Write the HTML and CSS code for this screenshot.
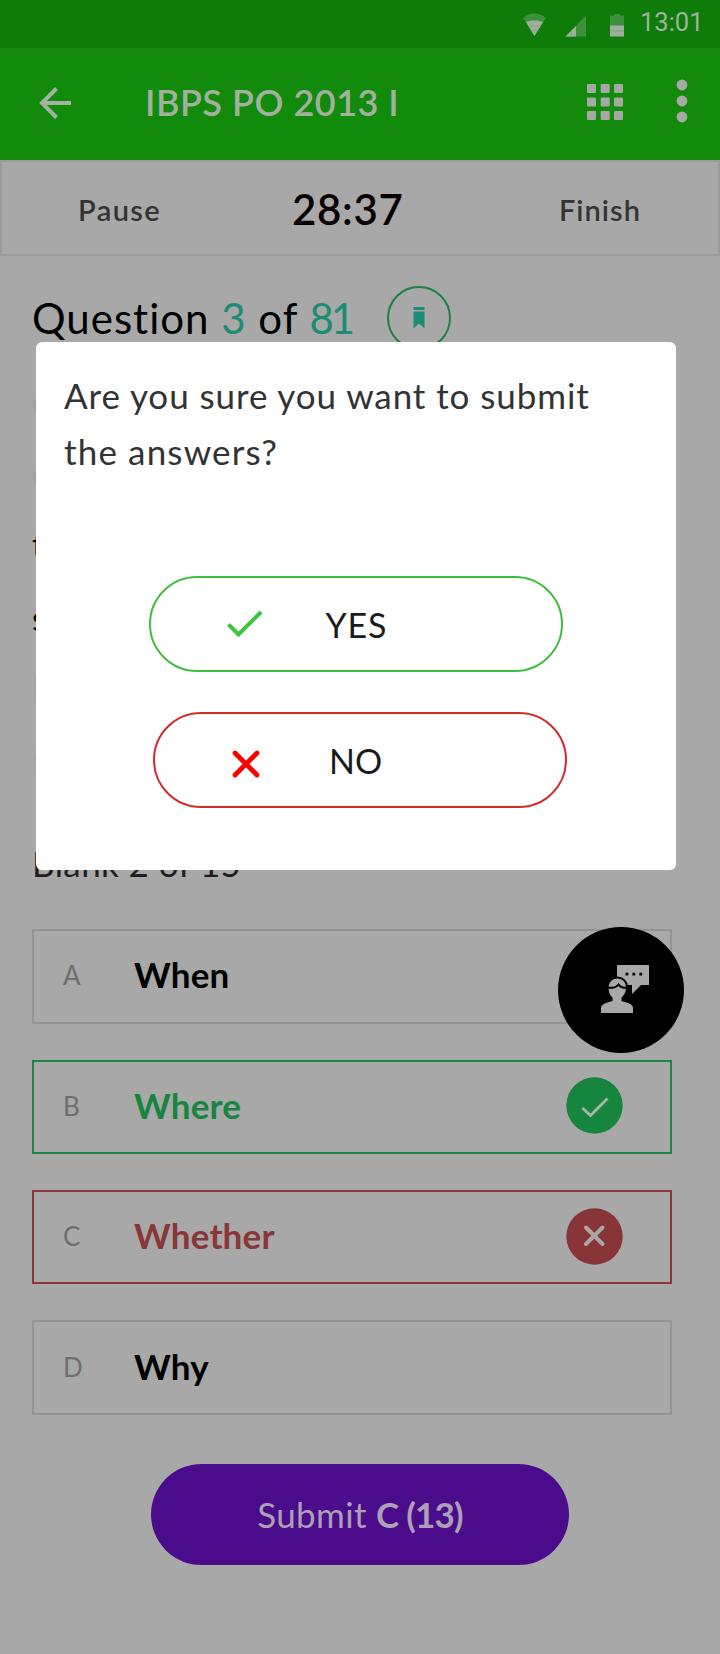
FILE: index.html
```html
<!DOCTYPE html>
<html lang="en">
<head>
<meta charset="utf-8">
<title>IBPS PO 2013 I</title>
<link rel="stylesheet" href="styles.css">
</head>
<body>
<div class="screen">
  <div class="status">
    <svg class="status-icons" width="106" height="26" viewBox="0 0 106 26">
      <path class="dim" d="M0 5C7-1 16-1 23 5L11.500 23Z"/>
      <path class="lit" d="M3 9C8 7 15 7 20 9L11.500 23Z"/>
      <path class="dim" d="M63 2.500V23.500H42.500Z"/>
      <path class="lit" d="M53 13V23.500H42.500Z"/>
      <path class="dim" d="M87 2.500h4V1h6v1.500h4V13H87Z"/>
      <path class="lit" d="M87 12.500h14v11H87Z"/>
      <path class="seam" d="M87 18h14M48.500 18v6M7 13h9M8.500 17h6"/>
    </svg>
    <span class="clock">13:01</span>
  </div>

  <header class="appbar">
    <svg class="back" width="34" height="32" viewBox="0 0 34 32"><path d="M32 16H3M17.500 1.500L3 16L17.500 30.500"/></svg>
    <h1 class="title">IBPS PO 2013 I</h1>
    <svg class="grid-icon" width="36" height="36" viewBox="0 0 36 36">
      <rect x="0" y="0" width="9" height="9" rx="1"/><rect x="13.700" y="0" width="9" height="9" rx="1"/><rect x="27" y="0" width="9" height="9" rx="1"/>
      <rect x="0" y="13.500" width="9" height="9" rx="1"/><rect x="13.700" y="13.500" width="9" height="9" rx="1"/><rect x="27" y="13.500" width="9" height="9" rx="1"/>
      <rect x="0" y="27" width="9" height="9" rx="1"/><rect x="13.700" y="27" width="9" height="9" rx="1"/><rect x="27" y="27" width="9" height="9" rx="1"/>
    </svg>
    <svg class="more" width="12" height="44" viewBox="0 0 12 44"><circle cx="6" cy="6" r="5.400"/><circle cx="6" cy="22" r="5.400"/><circle cx="6" cy="38" r="5.400"/></svg>
  </header>

  <div class="timer">
    <span class="pause">Pause</span>
    <span class="time">28:37</span>
    <span class="finish">Finish</span>
  </div>

  <main class="content">
    <div class="question">
      <h2 class="counter">Question <em>3</em> of <em class="total">81</em></h2>
      <span class="bookmark">
        <svg width="12" height="22" viewBox="0 0 12 22"><path d="M.5 0h11v3H.5ZM.5 4.500h11V21.500L6 16.500L.5 21.500Z"/></svg>
      </span>
    </div>
    <div class="passage">
      <p class="faint">c</p>
      <p class="faint">c</p>
      <p>t</p>
      <p>s</p>
      <p class="faint">l</p>
      <p class="faint">t</p>
    </div>
    <p class="blank">Blank 2 of 15</p>

    <div class="options">
      <div class="option"><span class="key">A</span><span class="word">When</span></div>
      <div class="option right"><span class="key">B</span><span class="word">Where</span>
        <svg class="mark" width="57" height="57" viewBox="0 0 57 57"><circle cx="28.500" cy="28.500" r="28.200"/><path d="M16.500 31L24.500 38.500L41.500 21.500"/></svg>
      </div>
      <div class="option wrong"><span class="key">C</span><span class="word">Whether</span>
        <svg class="mark" width="57" height="57" viewBox="0 0 57 57"><circle cx="28.500" cy="28.500" r="28.200"/><path class="cross" d="M20 19.500L36.500 36M36.500 19.500L20 36"/></svg>
      </div>
      <div class="option"><span class="key">D</span><span class="word">Why</span></div>
    </div>

    <button class="submit"><span>Submit <b>C (13)</b></span></button>
  </main>

  <button class="help" aria-label="Help">
    <svg width="48" height="48" viewBox="0 0 48 48">
      <path class="fig" d="M16 0H48V20H40L31 29V20H16Z"/>
      <path class="bg" d="M24.500 7.800h2.800v2.800h-2.800ZM31.400 7.800h2.800v2.800h-2.800ZM38.300 7.800h2.800v2.800h-2.800Z"/>
      <circle class="bg" cx="16.500" cy="22" r="10.500"/>
      <path class="fig" d="M7.500 22.500C8 10.500 25 10.500 25 22.500C25 27 23 30.500 20.500 32.500V36L27 38Q32 40 32 43V48H0V43Q0 40 5 38L11.500 36V32.500C9 30.500 7.500 27 7.500 22.500Z"/>
      <path class="hair" d="M7 22.500Q14 24 17.500 19.500Q20 23.500 26 22.500"/>
    </svg>
  </button>

  <div class="dialog" role="dialog">
    <p class="ask"><span>Are you sure you want to submit</span><br><span class="second">the answers?</span></p>
    <button class="choice yes">
      <svg width="36" height="28" viewBox="0 0 36 28"><path d="M1.500 14.500L11.500 24.500L34 2"/></svg>
      <span>YES</span>
    </button>
    <button class="choice no">
      <svg width="28" height="28" viewBox="0 0 28 28"><path d="M3 3L25 25M25 3L3 25"/></svg>
      <span>NO</span>
    </button>
  </div>
</div>
</body>
</html>
```
FILE: styles.css
```css
* { box-sizing: border-box; margin: 0; padding: 0; }
body { background: #a8a8a8; font-family: Lato, "Open Sans", sans-serif; font-variant-ligatures: none; color: #000; }
button { font: inherit; border: 0; background: none; }
svg { display: block; flex: none; }
span, h1, h2, p { white-space: nowrap; }
.screen { position: relative; width: 720px; height: 1654px; overflow: hidden; background: #a8a8a8; }

.status { height: 48px; background: #0d7c09; display: flex; padding-left: 523px; }
.status-icons { margin-top: 13px; }
.dim { fill: #3f903b; }
.lit { fill: #9fae9d; }
.seam { stroke: #80a27e; stroke-width: 1; }
.clock { font: 25.500px/30px Roboto, sans-serif; color: #a1b09f; margin: 7px 0 0 11px; }

.appbar { height: 112px; background: #128a0c; display: flex; align-items: center; padding-left: 39px; }
.back { margin-top: -2px; fill: none; stroke: #a2b39f; stroke-width: 4; }
.title { width: 441px; margin-left: 72px; margin-right: 1px; margin-top: -5px; font-size: 36px; line-height: 44px; font-weight: 600; letter-spacing: .5px; color: #a2b19f; }
.grid-icon { margin-top: -4px; fill: #a5a9a4; }
.more { margin: -6px 0 0 53px; fill: #a8a8a8; }

.timer { height: 96px; border: 2px solid #9a9a9a; display: grid; grid-template-columns: 214px 267px auto; padding-left: 76px; align-items: center; }
.pause, .finish { font-size: 29px; line-height: 36px; font-weight: 600; letter-spacing: 1.400px; color: #343434; padding-top: 4px; }
.finish { letter-spacing: 1px; }
.time { font-size: 42px; line-height: 50px; font-weight: 600; letter-spacing: .700px; color: #090000; padding-top: 1px; }

.content { padding: 30px 0 0 32px; }
.question { display: flex; height: 64px; align-items: center; }
.counter { width: 355px; font-size: 42px; line-height: 50px; font-weight: 400; letter-spacing: 1px; }
.counter em { font-style: normal; color: #1c8c74; }
.counter .total { letter-spacing: -3px; }
.bookmark { width: 64px; height: 64px; border: 2px solid #1d8044; border-radius: 50%; display: flex; align-items: center; justify-content: center; fill: #1c8c74; }
.passage { margin-top: 15px; font-size: 34px; line-height: 72.200px; }
.faint { color: #9f9f9f; }
.blank { margin-top: 40px; font-size: 35px; line-height: 50px; letter-spacing: .400px; color: #1e1e1e; }

.options { margin-top: 41px; display: grid; gap: 36px; }
.option { width: 640px; height: 94.400px; border: 2px solid #939393; display: flex; align-items: center; padding-left: 29px; }
.key { width: 71px; font-size: 26px; color: #6e6e6e; padding-bottom: 2px; }
.word { font-size: 35px; line-height: 44px; font-weight: 700; letter-spacing: .200px; padding-bottom: 4px; }
.mark { margin: -2px 47px 0 auto; fill: #16853e; }
.mark path { fill: none; stroke: #a5b3a8; stroke-width: 3; }
.mark .cross { stroke: #b0a5a5; stroke-width: 4; stroke-linecap: round; }
.right { border-color: #1c8543; }
.right .word { color: #178540; }
.wrong { border-color: #893838; }
.wrong .word { color: #883737; }
.wrong .mark { fill: #873537; }

.submit { display: flex; justify-content: center; align-items: center; width: 418px; height: 101px; margin: 49px 0 0 119px; border-radius: 51px; background: #4b0c8c; color: #aba0b5; font-size: 35px; line-height: 44px; letter-spacing: .350px; }
.submit b { font-weight: 700; letter-spacing: -.800px; }

.help { position: absolute; left: 558px; top: 927px; width: 126px; height: 126px; border-radius: 50%; background: #000; padding: 38px 0 0 43px; display: flex; align-items: flex-start; }
.fig { fill: #a8a8a8; }
.bg { fill: #000; }
.hair { fill: none; stroke: #000; stroke-width: 2; }

.dialog { position: absolute; left: 36px; top: 342px; width: 640px; height: 528px; border-radius: 6px; background: #fff; padding: 25px 0 0 28px; }
.ask { font-size: 35px; line-height: 56px; letter-spacing: .920px; color: #333; }
.second { letter-spacing: 1.150px; }
.choice { display: flex; align-items: center; width: 414px; height: 96px; border-radius: 48px; font-size: 34px; line-height: 44px; color: #1b1b1b; fill: none; }
.choice span { padding-top: 2px; }
.yes { margin: 97px 0 0 84.500px; border: 2px solid #40bd40; padding-left: 76px; }
.yes svg { stroke: #3cc43c; stroke-width: 4; }
.yes span { margin-left: 63px; letter-spacing: .800px; }
.no { margin: 40px 0 0 89px; border: 2px solid #cf2d2d; padding-left: 77px; }
.no svg { margin-top: 7px; stroke: #fb0000; stroke-width: 4.800; stroke-linecap: round; }
.no span { margin-left: 69px; }
```
